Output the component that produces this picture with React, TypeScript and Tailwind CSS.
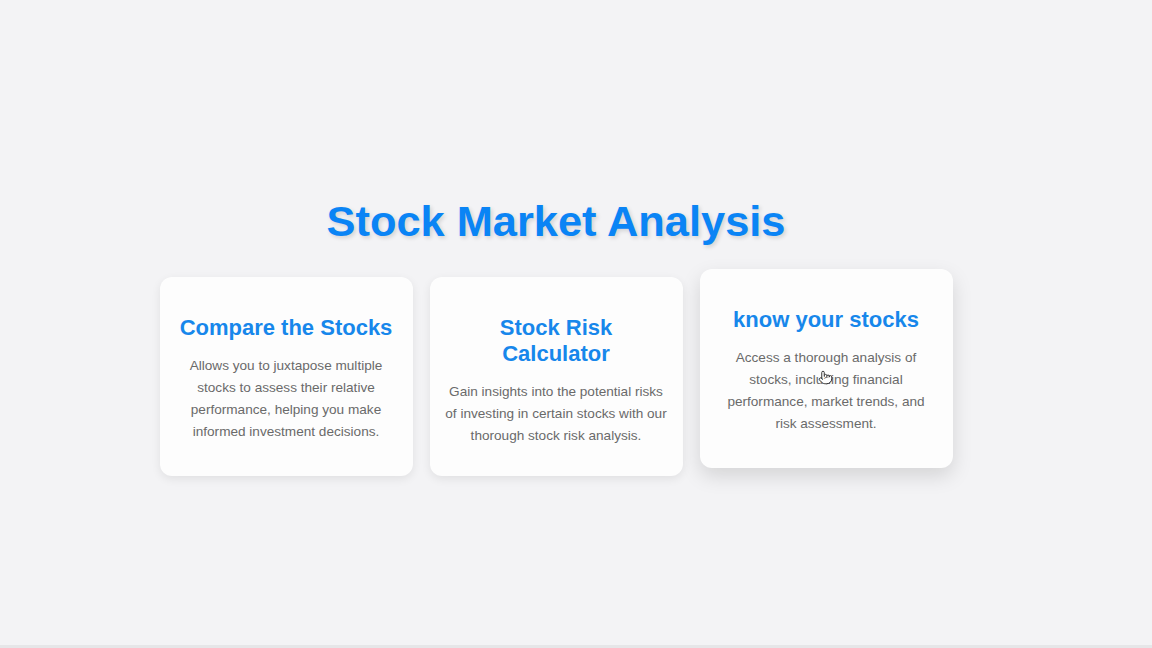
import { Pointer } from "lucide-react";

const cards = [
  {
    title: "Compare the Stocks",
    body: "Allows you to juxtapose multiple stocks to assess their relative performance, helping you make informed investment decisions.",
  },
  {
    title: "Stock Risk Calculator",
    body: "Gain insights into the potential risks of investing in certain stocks with our thorough stock risk analysis.",
  },
  {
    title: "know your stocks",
    body: "Access a thorough analysis of stocks, including financial performance, market trends, and risk assessment.",
    hovered: true,
  },
];

export default function App() {
  return (
    <div
      className="w-full h-[648px] bg-[#f3f3f5] flex flex-col border-b-[3px] border-[#e6e6e8]"
      style={{ fontFamily: '"Liberation Sans", Arial, sans-serif' }}
    >
      <div className="flex flex-col items-center pt-[196px] pr-[40px]">
        {/* Page title */}
        <h1 className="text-[43.4px] leading-[50px] font-bold text-[#0a84f5] [text-shadow:2px_2px_4px_rgba(0,0,0,0.14)]">
          Stock Market Analysis
        </h1>

        {/* Feature cards */}
        <div className="flex items-stretch gap-[17px] mt-[31px]">
          {cards.map((card) => (
            <div
              key={card.title}
              className={`relative w-[253px] rounded-[12px] bg-[#fdfdfd] px-[15px] pt-[38px] pb-[29px] text-center ${
                card.hovered
                  ? "-translate-y-2 shadow-[0_8px_20px_rgba(0,0,0,0.13)]"
                  : "shadow-[0_3px_10px_rgba(0,0,0,0.08)]"
              }`}
            >
              <h3 className="text-[22px] leading-[26px] font-bold text-[#1787eb]">
                {card.title}
              </h3>
              <p
                className={`mt-[14px] text-[13.6px] leading-[22px] text-[#6a6a6a] ${
                  card.hovered ? "px-[1px]" : ""
                }`}
              >
                {card.body}
              </p>
              {card.hovered && (
                <Pointer
                  className="absolute left-[118px] top-[101px] w-[15px] h-[15px] text-[#333] fill-white"
                  strokeWidth={1.6}
                />
              )}
            </div>
          ))}
        </div>
      </div>
    </div>
  );
}
